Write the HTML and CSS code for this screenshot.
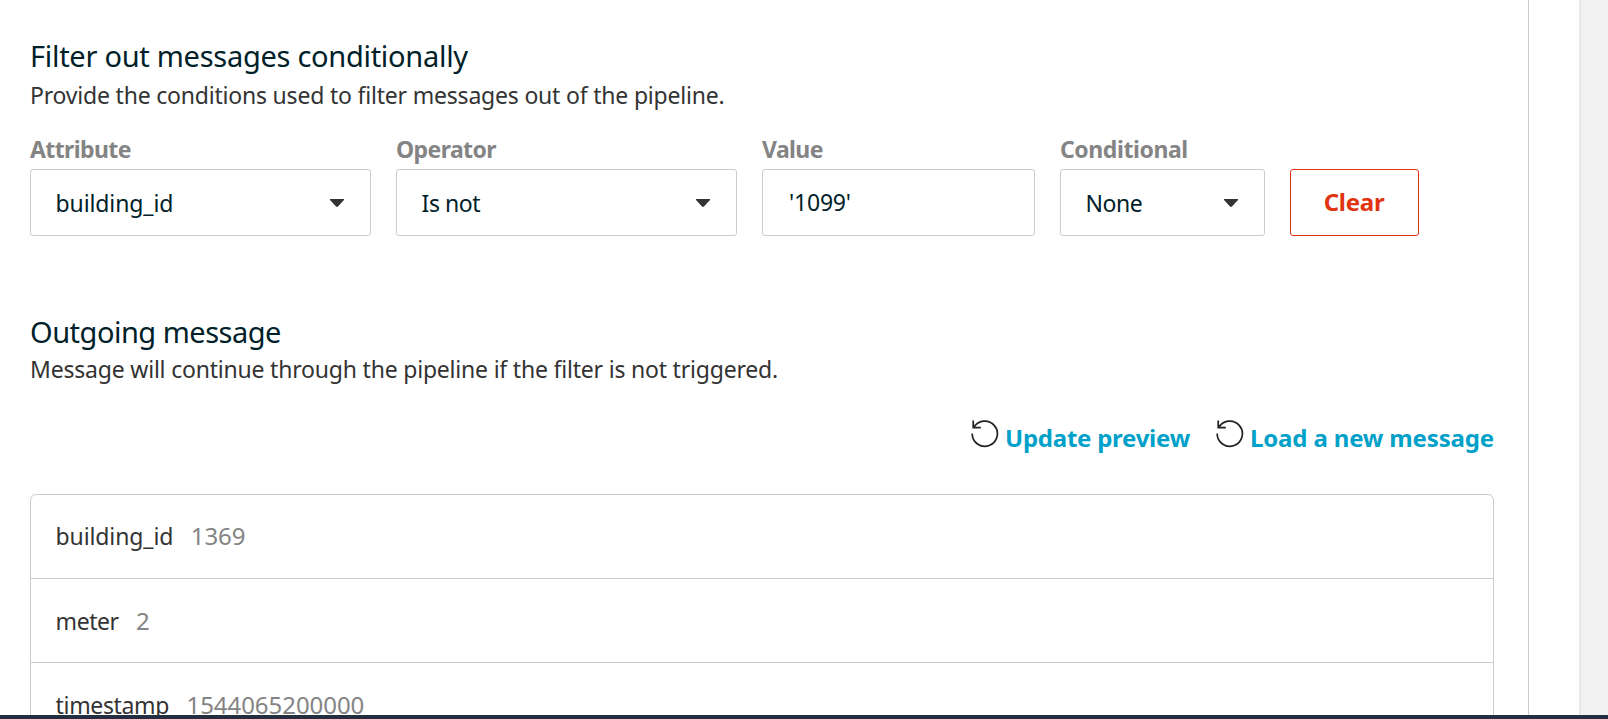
FILE: index.html
```html
<!DOCTYPE html>
<html lang="en">
<head>
<meta charset="utf-8">
<title>Filter messages</title>
<link rel="stylesheet" href="styles.css">
</head>
<body>
<div class="page">
  <main class="panel">
    <section class="filter">
      <h2 class="title"><span class="t t-filter">Filter out messages conditionally</span></h2>
      <p class="desc">Provide the conditions used to filter messages out of the pipeline.</p>
      <div class="fields">
        <div class="field wide">
          <label class="label">Attribute</label>
          <div class="box"><span class="t building">building_id</span><svg class="caret" viewBox="0 0 14 8"><path d="M0 0H14V1L8.2 7.3Q7 8.5 5.8 7.3L0 1Z"/></svg></div>
        </div>
        <div class="field wide">
          <label class="label">Operator</label>
          <div class="box"><span class="t short">Is not</span><svg class="caret" viewBox="0 0 14 8"><path d="M0 0H14V1L8.2 7.3Q7 8.5 5.8 7.3L0 1Z"/></svg></div>
        </div>
        <div class="field value">
          <label class="label">Value</label>
          <div class="box input"><span class="t num">'1099'</span></div>
        </div>
        <div class="field cond">
          <label class="label l-cond">Conditional</label>
          <div class="box"><span class="t short">None</span><svg class="caret" viewBox="0 0 14 8"><path d="M0 0H14V1L8.2 7.3Q7 8.5 5.8 7.3L0 1Z"/></svg></div>
        </div>
        <button class="clear">Clear</button>
      </div>
    </section>
    <section class="outgoing">
      <h2 class="title"><span class="t t-out">Outgoing message</span></h2>
      <p class="desc">Message will continue through the pipeline if the filter is not triggered.</p>
      <div class="actions">
        <a class="action"><svg class="reload" viewBox="0 0 28 28"><path d="M1.2 13.5A12.6 12.6 0 1 0 2.6 7.9M2.2 0.5V7.7H9.8"/></svg><span class="t a-upd">Update preview</span></a>
        <a class="action"><svg class="reload" viewBox="0 0 28 28"><path d="M1.2 13.5A12.6 12.6 0 1 0 2.6 7.9M2.2 0.5V7.7H9.8"/></svg><span class="t a-load">Load a new message</span></a>
      </div>
      <div class="table">
        <div class="row first"><span class="t building">building_id</span><span class="t val">1369</span></div>
        <div class="row"><span class="t short">meter</span><span class="t val">2</span></div>
        <div class="row"><span class="t stamp">timestamp</span><span class="t val">1544065200000</span></div>
      </div>
    </section>
  </main>
  <div class="gutter"></div>
  <aside class="rail"></aside>
</div>
<footer class="bar"></footer>
</body>
</html>
```
FILE: styles.css
```css
* { box-sizing: border-box; }
body { margin: 0; width: 1608px; height: 719px; overflow: hidden; display: flex; flex-direction: column; background: #fff; color: #333; font: 23px/32px "Noto Sans", "Open Sans", sans-serif; }
.page { display: flex; height: 715px; overflow: hidden; }
.panel { width: 1529px; border-right: 1px solid #ccc; padding: 36px 34px 0 30px; }
.gutter { width: 50px; }
.rail { flex: 1; background: #f1f1f1; border-left: 2px solid #e8e8e8; }
.bar { height: 4px; background: #232f3e; }
.t { white-space: nowrap; }
.title { margin: 0; font-size: 29px; line-height: 40px; font-weight: 400; color: #002129; }
.t-filter { letter-spacing: -0.28px; }
.t-out { letter-spacing: -0.5px; }
.desc { margin: 3px 0 0; letter-spacing: -0.2px; }
.fields { display: flex; gap: 25px; align-items: flex-end; margin-top: 22px; }
.label { display: block; font-weight: 700; color: #848484; letter-spacing: -0.6px; }
.l-cond { letter-spacing: -0.42px; }
.box { height: 67px; margin-top: 4px; border: 1px solid #ccc; border-radius: 3px; padding: 0 26px 0 24.6px; display: flex; align-items: center; justify-content: space-between; color: #002129; }
.input { padding: 0 26px 2px; }
.wide { width: 341px; }
.value { width: 273px; }
.cond { width: 205px; }
.caret { width: 14px; height: 8px; fill: #333; }
.building { letter-spacing: -0.12px; }
.short { letter-spacing: -0.45px; }
.num { letter-spacing: -0.2px; }
.stamp { letter-spacing: -0.35px; }
.clear { width: 129px; height: 67px; padding: 0 1px 2px 0; border: 1px solid #e1330f; border-radius: 3px; background: #fff; color: #e1330f; font: 700 24px/32px "Noto Sans", sans-serif; letter-spacing: -0.25px; }
.outgoing { margin-top: 76px; }
.outgoing .desc { margin-top: 1px; }
.actions { display: flex; justify-content: flex-end; gap: 26px; margin-top: 37px; }
.action { display: flex; color: #00a1c9; font-weight: 700; font-size: 24px; }
.a-upd { letter-spacing: -0.25px; }
.a-load { letter-spacing: -0.15px; }
.reload { width: 28px; height: 28px; margin: -2px 6px 0 0; fill: none; stroke: #222; stroke-width: 1.7; }
.table { margin-top: 40px; border: 1px solid #ccc; border-radius: 6px; }
.row { display: flex; align-items: center; height: 84px; padding-left: 24.6px; border-bottom: 1px solid #ccc; }
.first { padding-bottom: 2px; }
.val { color: #848484; font-size: 24px; margin-left: 17.5px; letter-spacing: -0.06px; }
```
